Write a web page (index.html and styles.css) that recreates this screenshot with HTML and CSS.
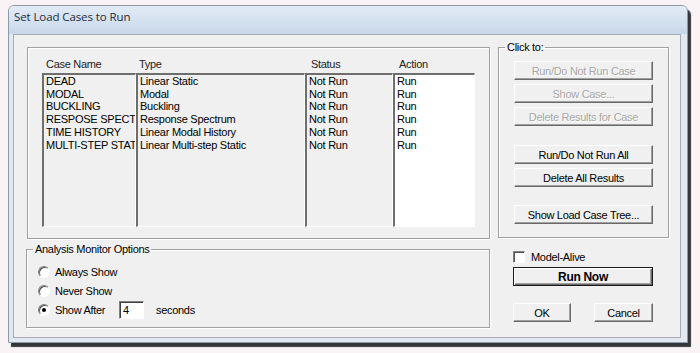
FILE: index.html
```html
<!DOCTYPE html>
<html lang="en">
<head>
  <meta charset="UTF-8">
  <meta name="viewport" content="width=device-width, initial-scale=1.0">
  <title>Set Load Cases to Run</title>
  <link rel="stylesheet" href="styles.css">
</head>
<body>
  <div class="window">
    <div class="titlebar">Set Load Cases to Run</div>
    <div class="frame">
      <div class="client">

        <div class="col-left">
          <div class="group cases">
            <div class="heads">
              <span class="c-name">Case Name</span>
              <span class="c-type">Type</span>
              <span class="c-status">Status</span>
              <span class="c-action">Action</span>
            </div>
            <div class="lists">
              <div class="list c-name">
                <div>DEAD</div>
                <div>MODAL</div>
                <div>BUCKLING</div>
                <div>RESPOSE SPECTRUM</div>
                <div>TIME HISTORY</div>
                <div>MULTI-STEP STATIC</div>
              </div>
              <div class="list c-type">
                <div>Linear Static</div>
                <div>Modal</div>
                <div>Buckling</div>
                <div>Response Spectrum</div>
                <div>Linear Modal History</div>
                <div>Linear Multi-step Static</div>
              </div>
              <div class="list c-status">
                <div>Not Run</div>
                <div>Not Run</div>
                <div>Not Run</div>
                <div>Not Run</div>
                <div>Not Run</div>
                <div>Not Run</div>
              </div>
              <div class="list c-action">
                <div>Run</div>
                <div>Run</div>
                <div>Run</div>
                <div>Run</div>
                <div>Run</div>
                <div>Run</div>
              </div>
            </div>
          </div>

          <fieldset class="group monitor">
            <legend>Analysis Monitor Options</legend>
            <div class="monitor-body">
              <label class="opt"><span class="radio"></span>Always Show</label>
              <label class="opt"><span class="radio"></span>Never Show</label>
              <label class="opt"><span class="radio checked"></span><span class="after-label">Show After</span><input class="field" type="text" value="4"><span class="secs">seconds</span></label>
            </div>
          </fieldset>
        </div>

        <div class="col-right">
          <fieldset class="group clickto">
            <legend>Click to:</legend>
            <div class="clickto-body">
              <button class="btn wide" disabled>Run/Do Not Run Case</button>
              <button class="btn wide" disabled>Show Case...</button>
              <button class="btn wide" disabled>Delete Results for Case</button>
              <button class="btn wide spaced">Run/Do Not Run All</button>
              <button class="btn wide">Delete All Results</button>
              <button class="btn wide spaced-sm">Show Load Case Tree...</button>
            </div>
          </fieldset>

          <label class="check"><span class="box"></span>Model-Alive</label>
          <button class="btn run-now">Run Now</button>
          <div class="ok-row">
            <button class="btn ok">OK</button>
            <button class="btn cancel">Cancel</button>
          </div>
        </div>

      </div>
    </div>
  </div>
</body>
</html>
```
FILE: styles.css
```css
* {
  box-sizing: border-box;
}
body {
  margin: 0;
  padding: 5px 0 0 8px;
  height: 353px;
  overflow: hidden;
  background: #f9f3f5;
  font-family: "Liberation Sans", Arial, sans-serif;
  font-size: 11px;
  letter-spacing: -0.3px;
  color: #000;
}
.window {
  width: 680px;
  height: 338px;
  border: 1px solid #8c9aa8;
  border-radius: 6px 6px 0 0;
  background: #e2e8ef;
  box-shadow: 3px 4px 1px #33373c;
}
.titlebar {
  height: 28px;
  padding-left: 5px;
  line-height: 22px;
  font-family: "Open Sans", sans-serif;
  font-size: 11.5px;
  letter-spacing: -0.1px;
  color: #1e2b3b;
  background: linear-gradient(#e2ebf5, #c8d8ea);
  border-radius: 5px 5px 0 0;
}
.frame {
  padding: 0 6px 4px 4px;
}
.client {
  display: flex;
  gap: 8px;
  height: 304px;
  padding: 0 11px 0 13px;
  border: 1px solid #a3acb6;
  background: #f0f0f0;
}
.col-left {
  width: 463px;
  padding-top: 12px;
}
.col-right {
  width: 171px;
  padding-top: 6px;
}

/* etched group frames */
.group {
  margin: 0;
  padding: 0;
  min-width: 0;
  border: 1px solid #a0a0a0;
  box-shadow: inset 1px 1px 0 #fff, 1px 1px 0 #fff;
}
.group legend {
  margin-left: 6px;
  padding: 0 2px;
  line-height: 13px;
}

/* load case lists */
.cases {
  height: 192px;
  padding: 0 14px;
}
.heads {
  display: flex;
  height: 25px;
  padding-top: 10px;
  line-height: 13px;
  color: #222;
}
.heads .c-name { padding-left: 4px; }
.heads .c-type { padding-left: 3px; }
.heads .c-status { padding-left: 6px; }
.heads .c-action { padding-left: 6px; }
.c-name { width: 94px; }
.c-type { width: 169px; }
.c-status { width: 88px; }
.c-action { width: 82px; }
.lists {
  display: flex;
  height: 154px;
}
.list {
  padding-left: 2px;
  border-top: 2px solid #6e6e6e;
  border-left: 2px solid #6e6e6e;
  border-right: 1px solid #fff;
  border-bottom: 1px solid #fff;
  background: #f0f0f0;
  line-height: 12.7px;
  letter-spacing: -0.25px;
  white-space: nowrap;
  overflow: hidden;
}
.list.c-action {
  background: #fff;
}

/* analysis monitor */
.monitor {
  margin: 4px 0 0 -1px;
  width: 464px;
  height: 85px;
}
.monitor-body {
  padding: 6px 0 0 11px;
}
.opt {
  display: flex;
  align-items: center;
  height: 19px;
}
.radio {
  position: relative;
  width: 12px;
  height: 12px;
  margin-right: 5px;
  border-radius: 50%;
  border: 1px solid;
  border-color: #808080 #fff #fff #808080;
  background: #fff;
  box-shadow: inset 1px 1px 0 #505050;
}
.radio.checked::after {
  content: "";
  position: absolute;
  left: 3px;
  top: 3px;
  width: 4px;
  height: 4px;
  border-radius: 50%;
  background: #000;
}
.after-label {
  width: 64px;
}
.field {
  width: 25px;
  height: 18px;
  padding: 0 0 0 3px;
  font: inherit;
  letter-spacing: inherit;
  border: 1px solid;
  border-color: #808080 #fff #fff #808080;
  box-shadow: inset 1px 1px 0 #404040;
  background: #fff;
}
.secs {
  margin-left: 12px;
}

/* right hand buttons */
.clickto {
  width: 171px;
  height: 197px;
}
.clickto-body {
  padding: 7px 0 0 15px;
}
.btn {
  display: block;
  padding: 0;
  font: inherit;
  letter-spacing: inherit;
  color: #000;
  background: #f0f0f0;
  border: 1px solid;
  border-color: #fff #696969 #696969 #fff;
  box-shadow: inset -1px -1px 0 #a0a0a0;
}
.btn:disabled {
  color: #a6a6a6;
  text-shadow: 1px 1px 0 #fff;
}
.wide {
  width: 139px;
  height: 19px;
  margin-bottom: 4px;
}
.spaced {
  margin-top: 19px;
}
.spaced-sm {
  margin-top: 18px;
}
.check {
  display: flex;
  align-items: center;
  height: 12px;
  margin: 13px 0 0 15px;
}
.box {
  width: 12px;
  height: 12px;
  margin-right: 6px;
  border: 1px solid;
  border-color: #808080 #fff #fff #808080;
  box-shadow: inset 1px 1px 0 #505050;
  background: #fff;
}
.run-now {
  width: 140px;
  height: 19px;
  margin: 4px 0 0 15px;
  font-size: 12px;
  font-weight: bold;
  border: 1px solid #1a1a1a;
  box-shadow: inset 1px 1px 0 #fff, inset -1px -1px 0 #696969, inset -2px -2px 0 #a0a0a0;
}
.ok-row {
  display: flex;
  gap: 23px;
  margin: 17px 0 0 15px;
}
.ok {
  width: 58px;
  height: 19px;
}
.cancel {
  width: 59px;
  height: 19px;
}
```
